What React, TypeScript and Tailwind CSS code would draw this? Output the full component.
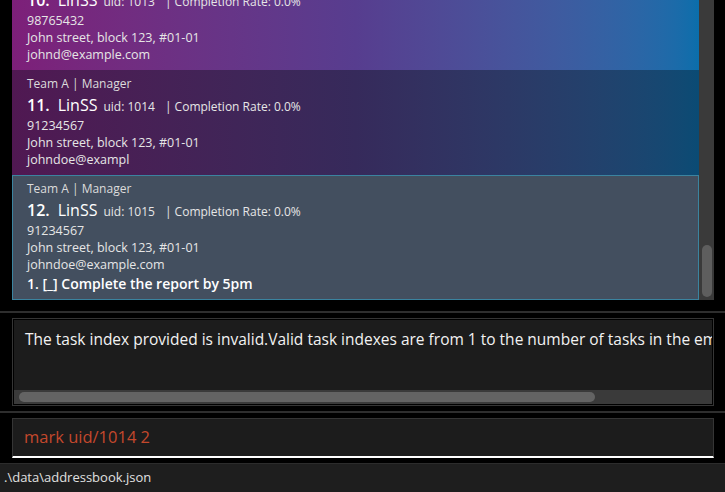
import React from "react";

type Person = {
  idx: string;
  uid: string;
  phone: string;
  email: string;
  tasks?: string[];
  tone: "bright" | "dark" | "selected";
};

const people: Person[] = [
  { idx: "10.", uid: "1013", phone: "98765432", email: "johnd@example.com", tone: "bright" },
  { idx: "11.", uid: "1014", phone: "91234567", email: "johndoe@exampl", tone: "dark" },
  {
    idx: "12.",
    uid: "1015",
    phone: "91234567",
    email: "johndoe@example.com",
    tasks: ["1. [_] Complete the report by 5pm"],
    tone: "selected",
  },
];

const toneClass = {
  bright:
    "bg-linear-to-r from-[#7d1f79] via-[#573d8f] to-[#0a6eab] bg-origin-border border border-transparent pb-[6px]",
  dark: "bg-linear-to-r from-[#501852] via-[#362a5b] to-[#0a4b74] bg-origin-border border border-transparent pb-[6px]",
  selected: "bg-[#434f5f] border border-[#3b84a0] pb-[5px]",
};

const PersonCard = ({ p }: { p: Person }) => (
  <div className={`${toneClass[p.tone]} pl-[14px] pt-[4px] text-[#e6e6e6]`}>
    <div className="text-[12px] leading-[18px] text-[#dcdcdc]">Team A | Manager</div>
    <div className="flex items-baseline h-[24px] leading-[24px]">
      <span className="text-[16px] font-semibold text-white mr-[8px]">{p.idx}</span>
      <span className="text-[16px] text-white">LinSS</span>
      <span className="text-[12px] ml-[6px]">uid: {p.uid}</span>
      <span className="text-[12px] ml-[10px]">| Completion Rate: 0.0%</span>
    </div>
    <div className="text-[12.5px] leading-[17px]">{p.phone}</div>
    <div className="text-[12.5px] leading-[17px]">John street, block 123, #01-01</div>
    <div className="text-[12.5px] leading-[17px]">{p.email}</div>
    {p.tasks?.map((t) => (
      <div key={t} className="mt-[1px] text-[14px] leading-[20px] font-semibold text-white">
        {t}
      </div>
    ))}
  </div>
);

const App = () => {
  return (
    <div
      className="w-[725px] h-[492px] bg-black flex flex-col overflow-hidden"
      style={{ fontFamily: '"Open Sans", "Noto Sans", sans-serif' }}
    >
      <div className="h-[300px] flex shrink-0">
        <div className="w-[12px]" />
        <div className="flex-1 overflow-hidden">
          <div className="-mt-[35px]">
            {people.map((p) => (
              <PersonCard key={p.idx} p={p} />
            ))}
          </div>
        </div>
        <div className="w-[15px] bg-[#3a3a3a] flex flex-col justify-end items-center pb-[3px]">
          <div className="w-[10px] h-[52px] rounded-[5px] bg-[#5e5e5e]" />
        </div>
        <div className="w-[11px]" />
      </div>

      <div className="h-[11px]" />
      <div className="h-[2px] bg-[#2e2e2e]" />
      <div className="h-[5px]" />

      <div className="mx-[12px] mr-[11px] h-[88px] border border-[#353535] p-[1px]">
        <div className="h-full bg-[#1c1c1c] flex flex-col overflow-hidden">
          <div className="flex-1 pl-[11px] pt-[8px] text-[15.5px] text-[#f2f2f2] whitespace-nowrap overflow-hidden">
            The task index provided is invalid.Valid task indexes are from 1 to the number of tasks in the employee's list.
          </div>
          <div className="h-[14px] bg-[#3a3a3a] flex items-center px-[5px]">
            <div className="w-[576px] h-[10px] rounded-[5px] bg-[#636363]" />
          </div>
        </div>
      </div>

      <div className="h-[5px]" />
      <div className="h-[2px] bg-[#2e2e2e]" />
      <div className="h-[5px]" />

      <div className="mx-[12px] mr-[11px] h-[40px] bg-[#1c1c1c] border border-[#353535] border-b-2 border-b-white flex items-center pl-[11px]">
        <span className="text-[16.5px] text-[#c4482c]">mark uid/1014 2</span>
      </div>

      <div className="h-[5px]" />
      <div className="flex-1 bg-[#1e1e1e] border-t border-[#2c2c2c] flex items-center pl-[4px]">
        <span className="text-[13px] text-[#e0e0e0]">.\data\addressbook.json</span>
      </div>
    </div>
  );
};

export default App;
